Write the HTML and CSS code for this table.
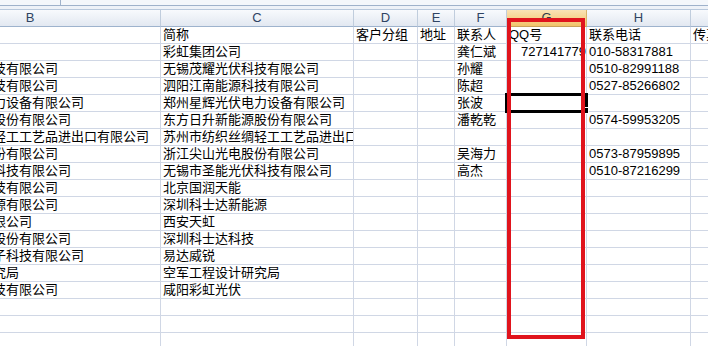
FILE: index.html
```html
<!DOCTYPE html>
<html lang="zh-CN">
<head>
<meta charset="utf-8">
<title>客户列表</title>
<link rel="stylesheet" href="styles.css">
</head>
<body>
<div class="wrap">
  <div class="fbar"><div class="namebox"></div><div class="formula"></div></div>
  <div class="gap"></div>
  <div class="grid hdr">
    <div class="h">B</div><div class="h">C</div><div class="h">D</div><div class="h">E</div><div class="h">F</div><div class="h sel-h">G</div><div class="h">H</div><div class="h">I</div>
  </div>
  <div class="grid body">
    <div class="c b">客户名称</div><div class="c">简称</div><div class="c">客户分组</div><div class="c">地址</div><div class="c">联系人</div><div class="c">QQ号</div><div class="c">联系电话</div><div class="c">传真</div>

    <div class="c b">彩虹集团公司</div><div class="c">彩虹集团公司</div><div class="c"></div><div class="c"></div><div class="c">龚仁斌</div><div class="c num">727141779</div><div class="c">010-58317881</div><div class="c"></div>

    <div class="c b">无锡茂耀光伏科技有限公司</div><div class="c">无锡茂耀光伏科技有限公司</div><div class="c"></div><div class="c"></div><div class="c">孙耀</div><div class="c"></div><div class="c">0510-82991188</div><div class="c"></div>

    <div class="c b">泗阳江南能源科技有限公司</div><div class="c">泗阳江南能源科技有限公司</div><div class="c"></div><div class="c"></div><div class="c">陈超</div><div class="c"></div><div class="c">0527-85266802</div><div class="c"></div>

    <div class="c b">郑州星辉光伏电力设备有限公司</div><div class="c">郑州星辉光伏电力设备有限公司</div><div class="c"></div><div class="c"></div><div class="c">张波</div><div class="c"></div><div class="c"></div><div class="c"></div>

    <div class="c b">东方日升新能源股份有限公司</div><div class="c">东方日升新能源股份有限公司</div><div class="c"></div><div class="c"></div><div class="c">潘乾乾</div><div class="c"></div><div class="c">0574-59953205</div><div class="c"></div>

    <div class="c b">苏州市纺织丝绸轻工工艺品进出口有限公司</div><div class="c">苏州市纺织丝绸轻工工艺品进出口有限公司</div><div class="c"></div><div class="c"></div><div class="c"></div><div class="c"></div><div class="c"></div><div class="c"></div>

    <div class="c b">浙江尖山光电股份有限公司</div><div class="c">浙江尖山光电股份有限公司</div><div class="c"></div><div class="c"></div><div class="c">吴海力</div><div class="c"></div><div class="c">0573-87959895</div><div class="c"></div>

    <div class="c b">无锡市圣能光伏科技有限公司</div><div class="c">无锡市圣能光伏科技有限公司</div><div class="c"></div><div class="c"></div><div class="c">高杰</div><div class="c"></div><div class="c">0510-87216299</div><div class="c"></div>

    <div class="c b">北京国润天能科技有限公司</div><div class="c">北京国润天能</div><div class="c"></div><div class="c"></div><div class="c"></div><div class="c"></div><div class="c"></div><div class="c"></div>

    <div class="c b">深圳科士达新能源有限公司</div><div class="c">深圳科士达新能源</div><div class="c"></div><div class="c"></div><div class="c"></div><div class="c"></div><div class="c"></div><div class="c"></div>

    <div class="c b">西安天虹电气有限公司</div><div class="c">西安天虹</div><div class="c"></div><div class="c"></div><div class="c"></div><div class="c"></div><div class="c"></div><div class="c"></div>

    <div class="c b">深圳科士达科技股份有限公司</div><div class="c">深圳科士达科技</div><div class="c"></div><div class="c"></div><div class="c"></div><div class="c"></div><div class="c"></div><div class="c"></div>

    <div class="c b">深圳易达威锐电子科技有限公司</div><div class="c">易达威锐</div><div class="c"></div><div class="c"></div><div class="c"></div><div class="c"></div><div class="c"></div><div class="c"></div>

    <div class="c b">空军工程设计研究局</div><div class="c">空军工程设计研究局</div><div class="c"></div><div class="c"></div><div class="c"></div><div class="c"></div><div class="c"></div><div class="c"></div>

    <div class="c b">咸阳彩虹光伏科技有限公司</div><div class="c">咸阳彩虹光伏</div><div class="c"></div><div class="c"></div><div class="c"></div><div class="c"></div><div class="c"></div><div class="c"></div>

    <div class="c b"></div><div class="c"></div><div class="c"></div><div class="c"></div><div class="c"></div><div class="c"></div><div class="c"></div><div class="c"></div>
    <div class="c b"></div><div class="c"></div><div class="c"></div><div class="c"></div><div class="c"></div><div class="c"></div><div class="c"></div><div class="c"></div>
    <div class="c b"></div><div class="c"></div><div class="c"></div><div class="c"></div><div class="c"></div><div class="c"></div><div class="c"></div><div class="c"></div>
  </div>
  <div class="selbox"><div class="handle"></div></div>
  <div class="redbox"></div>
</div>
</body>
</html>
```
FILE: styles.css
```css
html, body {
  margin: 0;
  padding: 0;
  width: 708px;
  height: 346px;
  overflow: hidden;
  background: #ffffff;
}
.wrap {
  position: relative;
  width: 708px;
  height: 346px;
  overflow: hidden;
  font-family: "Liberation Sans", "Noto Sans CJK SC", sans-serif;
  font-size: 13px;
  color: #000;
}
.fbar {
  display: flex;
  height: 5px;
  background: #f4f7fb;
  border-bottom: 1px solid #9fb2cb;
}
.namebox {
  width: 60px;
  border-right: 1px solid #9fb2cb;
}
.gap {
  height: 3px;
  background: #eef2f8;
}
.grid {
  display: grid;
  grid-template-columns: 261px 193px 64px 37px 52px 80px 104px 120px;
  margin-left: -100px;
  width: 911px;
}
.hdr {
  border-top: 1px solid #b8c8dc;
}
.h {
  box-sizing: border-box;
  height: 17px;
  line-height: 16px;
  text-align: center;
  color: #2f4363;
  background: linear-gradient(#f8fafd, #e2e8f1);
  border-right: 1px solid #c0cddd;
  border-bottom: 1px solid #9eb3cd;
}
.sel-h {
  background: linear-gradient(#fae3b6, #f2c46a);
  border-right-color: #d9b46a;
  border-bottom-color: #c9a25a;
  color: #2f3a4a;
}
.c {
  box-sizing: border-box;
  height: 17px;
  line-height: 16px;
  padding: 0 2px;
  white-space: nowrap;
  overflow: hidden;
  border-right: 1px solid #d0d7e5;
  border-bottom: 1px solid #d0d7e5;
}
.num {
  text-align: right;
  padding-right: 0;
}
.selbox {
  position: absolute;
  left: 505px;
  top: 93px;
  width: 83px;
  height: 20px;
  box-sizing: border-box;
  border: 3px solid #000;
}
.handle {
  position: absolute;
  right: -4px;
  bottom: -4px;
  width: 5px;
  height: 5px;
  background: #000;
  border: 1px solid #fff;
}
.redbox {
  position: absolute;
  left: 507px;
  top: 18px;
  width: 78px;
  height: 321px;
  box-sizing: border-box;
  border: 4px solid #e0141d;
}
```
